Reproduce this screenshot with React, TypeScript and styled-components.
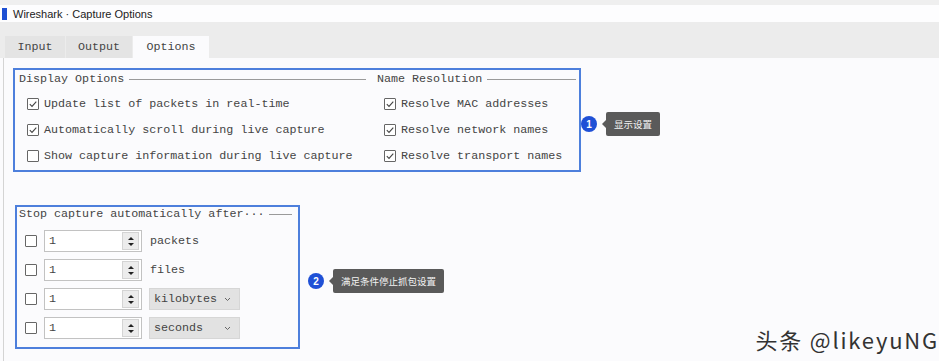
import React from "react";
import styled, { createGlobalStyle } from "styled-components";

const GlobalStyle = createGlobalStyle`
  html, body { margin: 0; padding: 0; background: #fbfbfd; }
  * { box-sizing: border-box; }
`;

const MONO = `"Liberation Mono", "DejaVu Sans Mono", monospace`;
const CJK = `"Noto Sans CJK SC", "Noto Sans", sans-serif`;
const BLUE = "#4d7fdc";

const Page = styled.div`
  position: relative;
  width: 939px;
  height: 361px;
  overflow: hidden;
  background: #fbfbfd;
  display: flex;
  flex-direction: column;
  font-family: ${MONO};
  font-size: 11.7px;
  color: #444;
`;

const TopStrip = styled.div`
  height: 5px;
  background: #efefef;
`;

const TitleBar = styled.div`
  height: 17px;
  background: #fdfdfe;
  display: flex;
  align-items: center;
  gap: 6px;
  padding-left: 2px;
  font-family: "Liberation Sans", Arial, sans-serif;
  font-size: 11px;
  color: #222;
`;

const AppIcon = styled.span`
  width: 5px;
  height: 12px;
  background: #1d4fd3;
`;

const TabBar = styled.div`
  height: 36px;
  background: #ececec;
  display: flex;
  align-items: flex-end;
  padding-left: 5px;
`;

const Tab = styled.div<{ $active?: boolean }>`
  height: 22px;
  padding: 0 12px;
  display: flex;
  align-items: center;
  justify-content: center;
  min-width: ${(p) => (p.$active ? "76px" : "60px")};
  background: ${(p) => (p.$active ? "#fbfbfd" : "#e4e4e4")};
  margin-right: 1px;
  color: #444;
`;

const Content = styled.div`
  flex: 1;
  margin-left: 3px;
  border-left: 1px solid #d4d4d4;
  padding: 10px 0 0 9px;
  display: flex;
  flex-direction: column;
`;

const Section = styled.div<{ $mt?: number; $ml?: number }>`
  display: flex;
  align-items: center;
  margin-top: ${(p) => p.$mt ?? 0}px;
  margin-left: ${(p) => p.$ml ?? 0}px;
`;

const GroupBox = styled.div<{ $w: number; $h: number; $pt: number; $pl: number }>`
  width: ${(p) => p.$w}px;
  height: ${(p) => p.$h}px;
  border: 2px solid ${BLUE};
  padding: ${(p) => p.$pt}px 3px 0 ${(p) => p.$pl}px;
`;

const Columns = styled.div`
  display: grid;
  grid-template-columns: 358px 1fr;
`;

const Legend = styled.div<{ $gapRight?: number }>`
  display: flex;
  align-items: center;
  height: 14px;
  margin-right: ${(p) => p.$gapRight ?? 0}px;
  white-space: nowrap;
  &::after {
    content: "";
    flex: 1;
    height: 1px;
    background: #9a9a9a;
    margin-left: 5px;
  }
`;

const CheckList = styled.div<{ $pl: number }>`
  display: flex;
  flex-direction: column;
  padding: 11px 0 0 ${(p) => p.$pl}px;
  gap: 12px;
`;

const CheckRow = styled.div`
  display: flex;
  align-items: center;
  height: 14px;
  gap: 5px;
  white-space: nowrap;
`;

const Box = styled.span`
  width: 12px;
  height: 12px;
  border: 1px solid #666;
  border-radius: 1px;
  background: #fff;
  display: inline-flex;
  align-items: center;
  justify-content: center;
  flex: none;
`;

const Check: React.FC<{ on?: boolean }> = ({ on }) => (
  <Box>
    {on && (
      <svg width="10" height="10" viewBox="0 0 10 10">
        <polyline points="1.8,5.2 4,7.4 8.3,2.6" fill="none" stroke="#444" strokeWidth="1.1" />
      </svg>
    )}
  </Box>
);

const Marker = styled.div<{ $ml: number }>`
  display: flex;
  align-items: center;
  margin: 8px 0 0 ${(p) => p.$ml}px;
`;

const Badge = styled.div`
  width: 16px;
  height: 16px;
  border-radius: 50%;
  background: #1f50d6;
  color: #fff;
  font-family: "Liberation Sans", Arial, sans-serif;
  font-weight: bold;
  font-size: 10px;
  display: flex;
  align-items: center;
  justify-content: center;
  flex: none;
`;

const Tip = styled.div`
  position: relative;
  margin-left: 9px;
  height: 24px;
  padding: 0 8px;
  background: #5a5a5a;
  border-radius: 2px;
  color: #f2f2f2;
  font-family: ${CJK};
  font-size: 9.5px;
  display: flex;
  align-items: center;
  &::before {
    content: "";
    position: absolute;
    left: -4px;
    top: 8px;
    border-top: 4px solid transparent;
    border-bottom: 4px solid transparent;
    border-right: 4px solid #5a5a5a;
  }
`;

const StopList = styled.div`
  display: flex;
  flex-direction: column;
  gap: 7px;
  padding: 9px 0 0 6px;
`;

const StopRow = styled.div`
  display: flex;
  align-items: center;
  height: 22px;
`;

const Spin = styled.div`
  margin-left: 7px;
  width: 98px;
  height: 22px;
  border: 1px solid #c2c2c2;
  background: #fff;
  display: flex;
  align-items: center;
  padding-left: 4px;
`;

const SpinValue = styled.span`
  flex: 1;
`;

const SpinButtons = styled.div`
  width: 17px;
  height: 18px;
  margin-right: 2px;
  background: #ececec;
  border: 1px solid #d4d4d4;
  display: flex;
  flex-direction: column;
  align-items: center;
  justify-content: space-around;
  padding: 2px 0;
`;

const Arrow = styled.span<{ $down?: boolean }>`
  width: 0;
  height: 0;
  border-left: 3px solid transparent;
  border-right: 3px solid transparent;
  ${(p) => (p.$down ? "border-top: 3px solid #222;" : "border-bottom: 3px solid #222;")}
`;

const Unit = styled.span`
  margin-left: 8px;
`;

const Combo = styled.div`
  margin-left: 7px;
  width: 91px;
  height: 22px;
  background: #e2e2e2;
  border: 1px solid #d6d6d6;
  display: flex;
  align-items: center;
  justify-content: space-between;
  padding: 0 8px 0 4px;
`;

const Watermark = styled.div`
  position: absolute;
  right: 0;
  bottom: 6px;
  font-family: ${CJK};
  font-size: 22px;
  color: #333;
  letter-spacing: 1.8px;
`;

const SpinBox: React.FC = () => (
  <Spin>
    <SpinValue>1</SpinValue>
    <SpinButtons>
      <Arrow />
      <Arrow $down />
    </SpinButtons>
  </Spin>
);

const Chevron = () => (
  <svg width="7" height="5" viewBox="0 0 7 5">
    <polyline points="1,1 3.5,3.5 6,1" fill="none" stroke="#666" strokeWidth="1" />
  </svg>
);

const stopRows: { unit: string; combo?: boolean }[] = [
  { unit: "packets" },
  { unit: "files" },
  { unit: "kilobytes", combo: true },
  { unit: "seconds", combo: true },
];

export default function App() {
  return (
    <Page>
      <GlobalStyle />
      <TopStrip />
      <TitleBar>
        <AppIcon />
        Wireshark · Capture Options
      </TitleBar>
      <TabBar>
        <Tab>Input</Tab>
        <Tab>Output</Tab>
        <Tab $active>Options</Tab>
      </TabBar>
      <Content>
        <Section>
          <GroupBox $w={568} $h={104} $pt={2} $pl={4}>
            <Columns>
              <div>
                <Legend $gapRight={11}>Display Options</Legend>
                <CheckList $pl={8}>
                  <CheckRow><Check on />Update list of packets in real-time</CheckRow>
                  <CheckRow><Check on />Automatically scroll during live capture</CheckRow>
                  <CheckRow><Check />Show capture information during live capture</CheckRow>
                </CheckList>
              </div>
              <div>
                <Legend>Name Resolution</Legend>
                <CheckList $pl={7}>
                  <CheckRow><Check on />Resolve MAC addresses</CheckRow>
                  <CheckRow><Check on />Resolve network names</CheckRow>
                  <CheckRow><Check on />Resolve transport names</CheckRow>
                </CheckList>
              </div>
            </Columns>
          </GroupBox>
          <Marker $ml={0}>
            <Badge>1</Badge>
            <Tip>显示设置</Tip>
          </Marker>
        </Section>
        <Section $mt={33} $ml={2}>
          <GroupBox $w={285} $h={144} $pt={0} $pl={2}>
            <Legend $gapRight={3}>Stop capture automatically after···</Legend>
            <StopList>
              {stopRows.map((r) => (
                <StopRow key={r.unit}>
                  <Check />
                  <SpinBox />
                  {r.combo ? (
                    <Combo>
                      {r.unit}
                      <Chevron />
                    </Combo>
                  ) : (
                    <Unit>{r.unit}</Unit>
                  )}
                </StopRow>
              ))}
            </StopList>
          </GroupBox>
          <Marker $ml={8}>
            <Badge>2</Badge>
            <Tip>满足条件停止抓包设置</Tip>
          </Marker>
        </Section>
      </Content>
      <Watermark>头条 @likeyuNG</Watermark>
    </Page>
  );
}
